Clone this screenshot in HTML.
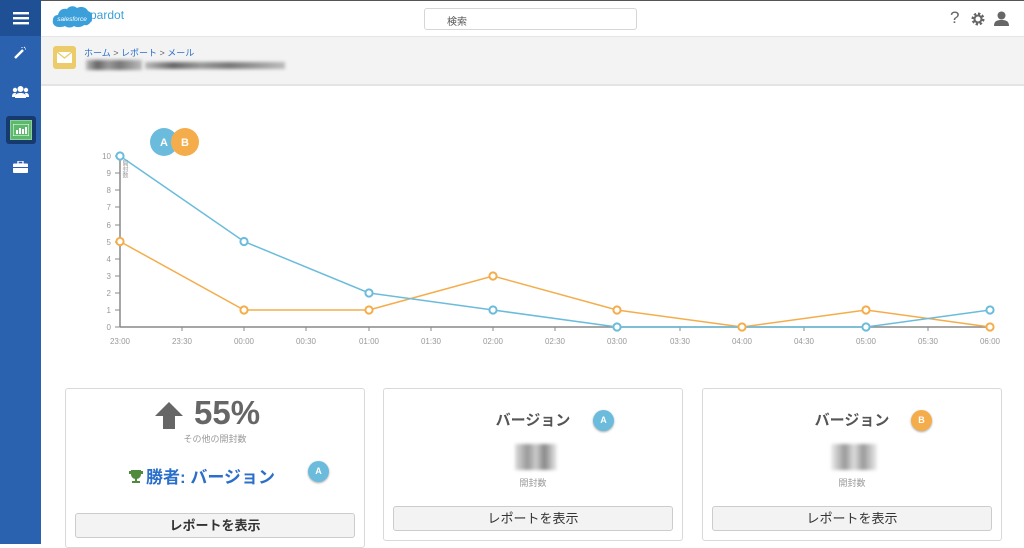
<!DOCTYPE html>
<html><head><meta charset="utf-8"><style>
*{margin:0;padding:0;box-sizing:border-box}
body{width:1024px;height:544px;overflow:hidden;background:#fff;font-family:"Liberation Sans","Noto Sans CJK JP",sans-serif;position:relative}
.side{position:absolute;left:0;top:0;width:41px;height:544px;background:#2a62b0}
.side .top{height:36px;background:#1f4f94;display:flex;align-items:center;justify-content:center}
.topbar{position:absolute;left:41px;top:0;right:0;height:36px;background:#fff;border-top:1px solid #555}
.hdr{position:absolute;left:41px;top:36px;right:0;height:50px;background:#f3f3f3;border-top:1px solid #e6e6e6;border-bottom:2px solid #e4e4e4}
.card{position:absolute;top:388px;width:300px;background:#fff;border:1px solid #d9d9d9;border-radius:3px}
.btn{position:absolute;left:9px;right:9px;height:25px;background:#f3f3f3;border:1px solid #ccc;border-radius:3px;text-align:center;font-size:13px;line-height:23px;color:#333}
.badge{position:absolute;width:21px;height:21px;border-radius:50%;color:#fff;font-size:9px;font-weight:bold;text-align:center;line-height:21px;box-shadow:0 1px 2px rgba(0,0,0,.35)}
.blur{position:absolute;background:linear-gradient(90deg,#bbb,#666 20%,#999 40%,#777 60%,#bbb);filter:blur(1.5px)}
</style></head><body>
<div class="side">
 <div class="top"><svg width="16" height="14"><rect y="1" width="16" height="2.4" fill="#fff"/><rect y="6" width="16" height="2.4" fill="#fff"/><rect y="11" width="16" height="2.4" fill="#fff"/></svg></div>
 <svg style="position:absolute;left:13px;top:46px" width="14" height="14"><path d="M2 12 L10 4" stroke="#fff" stroke-width="2.5"/><path d="M11 1l1 1M13 3l-1 0M9 1l0 1" stroke="#fff" stroke-width="1"/></svg>
 <svg style="position:absolute;left:12px;top:85px" width="17" height="13"><circle cx="8.5" cy="4" r="3" fill="#fff"/><circle cx="3" cy="5" r="2.2" fill="#fff"/><circle cx="14" cy="5" r="2.2" fill="#fff"/><path d="M3 13c0-4 2-5 5.5-5s5.5 1 5.5 5z M0 12c0-3 1-4 3-4l1 0 -1 4z M17 12c0-3-1-4-3-4l-1 0 1 4z" fill="#fff"/></svg>
 <div style="position:absolute;left:6px;top:116px;width:30px;height:28px;background:#163a6e;border-radius:3px"></div>
 <div style="position:absolute;left:10px;top:120px;width:22px;height:20px;background:#5cb86b;border:1px solid #8fd09a"></div>
 <svg style="position:absolute;left:13px;top:124px" width="16" height="12"><rect x="0" y="0" width="16" height="12" fill="none" stroke="#fff" stroke-width="1"/><rect x="3" y="6" width="2" height="4" fill="#fff"/><rect x="6" y="4" width="2" height="6" fill="#fff"/><rect x="9" y="5" width="2" height="5" fill="#fff"/><rect x="12" y="3" width="2" height="7" fill="#fff"/></svg>
 <svg style="position:absolute;left:13px;top:161px" width="15" height="12"><rect x="0" y="2.5" width="15" height="9.5" rx="1" fill="#fff"/><rect x="5" y="0" width="5" height="3" fill="none" stroke="#fff" stroke-width="1.3"/><rect x="0" y="6" width="15" height="1" fill="#2a62b0"/></svg>
</div>
<div class="topbar">
 <svg style="position:absolute;left:11px;top:1px" width="40" height="29"><path d="M7 25c-5 0-7-4-6-7 0-3 2-5 5-5 1-5 5-7 9-6 2-3 7-4 10-1 4-2 9-1 11 3 3 1 5 4 4 8-1 4-4 7-8 6-2 2-7 3-10 1-2 2-7 2-9 0-2 1-5 1-6 1z" fill="#3b9fd9"/><text x="20" y="19" font-size="6.5" fill="#fff" text-anchor="middle" font-style="italic" font-family="Liberation Sans">salesforce</text></svg>
 <span style="position:absolute;left:49px;top:7px;font-size:12px;color:#3b9fd9">pardot</span>
 <div style="position:absolute;left:383px;top:7px;width:213px;height:22px;border:1px solid #d6d6d6;border-radius:3px;font-size:10px;color:#555;padding:4px 0 0 22px">検索</div>
 <span style="position:absolute;left:909px;top:7px;font-size:17px;color:#666">?</span>
 <svg style="position:absolute;left:930px;top:11px" width="14" height="14"><circle cx="7" cy="7" r="5" fill="none" stroke="#666" stroke-width="3" stroke-dasharray="2.2 1.7"/><circle cx="7" cy="7" r="3.5" fill="none" stroke="#666" stroke-width="2"/></svg>
 <svg style="position:absolute;left:953px;top:10px" width="15" height="15"><circle cx="7.5" cy="4.5" r="4" fill="#666"/><path d="M0 15c0-5 3-6 7.5-6s7.5 1 7.5 6z" fill="#666"/></svg>
</div>
<div class="hdr">
 <div style="position:absolute;left:12px;top:9px;width:23px;height:23px;background:#eccc6a;border-radius:3px"></div>
 <svg style="position:absolute;left:16px;top:15px" width="15" height="11"><rect width="15" height="11" fill="#fff"/><path d="M0 0l7.5 6 7.5-6" stroke="#eccc6a" stroke-width="1.3" fill="none"/></svg>
 <div style="position:absolute;left:43px;top:9px;font-size:9px;color:#2a6fc9">ホーム <span style="color:#666">&gt;</span> レポート <span style="color:#666">&gt;</span> メール</div>
 <div class="blur" style="left:45px;top:23px;width:56px;height:10px"></div>
 <div class="blur" style="left:104px;top:25px;width:140px;height:7px"></div>
</div>
<svg style="position:absolute;left:0;top:0" width="1024" height="380" font-family="Liberation Sans" font-size="8" fill="#999">
 <line x1="120" y1="156" x2="120" y2="327" stroke="#888" stroke-width="1.5"/>
 <line x1="120" y1="327" x2="990" y2="327" stroke="#888" stroke-width="1.5"/>
 <g text-anchor="end">
 <text x="111" y="159">10</text><text x="111" y="176">9</text><text x="111" y="193">8</text><text x="111" y="210">7</text><text x="111" y="228">6</text><text x="111" y="245">5</text><text x="111" y="262">4</text><text x="111" y="279">3</text><text x="111" y="296">2</text><text x="111" y="313">1</text><text x="111" y="330">0</text>
 </g>
 <g stroke="#888"><path d="M115 156h5M115 173h5M115 190h5M115 207h5M115 225h5M115 242h5M115 259h5M115 276h5M115 293h5M115 310h5M115 327h5"/>
 <path d="M182 327v4M244 327v4M306 327v4M369 327v4M431 327v4M493 327v4M555 327v4M617 327v4M680 327v4M742 327v4M804 327v4M866 327v4M928 327v4M990 327v4"/></g>
 <g text-anchor="middle"><text x="120" y="344">23:00</text><text x="182" y="344">23:30</text><text x="244" y="344">00:00</text><text x="306" y="344">00:30</text><text x="369" y="344">01:00</text><text x="431" y="344">01:30</text><text x="493" y="344">02:00</text><text x="555" y="344">02:30</text><text x="617" y="344">03:00</text><text x="680" y="344">03:30</text><text x="742" y="344">04:00</text><text x="804" y="344">04:30</text><text x="866" y="344">05:00</text><text x="928" y="344">05:30</text><text x="990" y="344">06:00</text></g>
 <text x="124" y="160" font-size="6" writing-mode="tb">開封数</text>
 <polyline points="120,241.5 244,310 369,310 493,276 617,310 742,327 866,310 990,327" fill="none" stroke="#f4ad4a" stroke-width="1.5"/>
 <polyline points="120,156 244,241.5 369,293 493,310 617,327 742,327 866,327 990,310" fill="none" stroke="#6bbcdc" stroke-width="1.5"/>
 <g fill="#fff" stroke="#6bbcdc" stroke-width="2"><circle cx="120" cy="156" r="3.6"/><circle cx="244" cy="241.5" r="3.6"/><circle cx="369" cy="293" r="3.6"/><circle cx="493" cy="310" r="3.6"/><circle cx="617" cy="327" r="3.6"/><circle cx="866" cy="327" r="3.6"/><circle cx="990" cy="310" r="3.6"/></g>
 <g fill="#fff" stroke="#f4ad4a" stroke-width="2"><circle cx="120" cy="241.5" r="3.6"/><circle cx="244" cy="310" r="3.6"/><circle cx="369" cy="310" r="3.6"/><circle cx="493" cy="276" r="3.6"/><circle cx="617" cy="310" r="3.6"/><circle cx="742" cy="327" r="3.6"/><circle cx="866" cy="310" r="3.6"/><circle cx="990" cy="327" r="3.6"/></g>
 <circle cx="164" cy="142" r="14" fill="#6bbcdc"/><circle cx="185" cy="142" r="14" fill="#f4ad4a"/>
 <text x="164" y="146" font-size="11" font-weight="bold" fill="#fff" text-anchor="middle">A</text><text x="185" y="146" font-size="11" font-weight="bold" fill="#fff" text-anchor="middle">B</text>
</svg>
<div class="card" style="left:65px;height:160px">
 <svg style="position:absolute;left:89px;top:13px" width="28" height="27"><path d="M14 0L28 14h-8v13h-12v-13h-8z" fill="#666"/></svg>
 <div style="position:absolute;left:128px;top:5px;font-size:33px;font-weight:bold;color:#666">55%</div>
 <div style="position:absolute;left:0;right:0;top:43px;text-align:center;font-size:9px;color:#999">その他の開封数</div>
 <svg style="position:absolute;left:63px;top:80px" width="14" height="14"><path d="M2 1h10v4c0 3-2 5-5 5s-5-2-5-5z M0 2h2v3H0z M12 2h2v3h-2z" fill="#4f8a3d"/><rect x="6" y="9" width="2" height="3" fill="#4f8a3d"/><rect x="3" y="12" width="8" height="2" fill="#4f8a3d"/></svg>
 <div style="position:absolute;left:80px;top:74px;font-size:17px;font-weight:bold;color:#2a6fc9">勝者: バージョン</div>
 <div class="badge" style="left:242px;top:72px;background:#6bbcdc">A</div>
 <div class="btn" style="top:124px;font-weight:bold">レポートを表示</div>
</div>
<div class="card" style="left:383px;height:153px">
 <div style="position:absolute;left:0;right:0;top:20px;text-align:center;font-size:15px;font-weight:bold;color:#555">バージョン</div>
 <div class="badge" style="left:209px;top:21px;background:#6bbcdc">A</div>
 <div class="blur" style="left:131px;top:55px;width:42px;height:26px;background:linear-gradient(90deg,#ddd,#999 30%,#ccc 50%,#888 70%,#eee)"></div>
 <div style="position:absolute;left:0;right:0;top:87px;text-align:center;font-size:9px;color:#999">開封数</div>
 <div class="btn" style="top:117px">レポートを表示</div>
</div>
<div class="card" style="left:702px;height:153px">
 <div style="position:absolute;left:0;right:0;top:20px;text-align:center;font-size:15px;font-weight:bold;color:#555">バージョン</div>
 <div class="badge" style="left:208px;top:21px;background:#f4ad4a">B</div>
 <div class="blur" style="left:128px;top:55px;width:46px;height:26px;background:linear-gradient(90deg,#eee,#999 30%,#ddd 50%,#999 70%,#eee)"></div>
 <div style="position:absolute;left:0;right:0;top:87px;text-align:center;font-size:9px;color:#999">開封数</div>
 <div class="btn" style="top:117px">レポートを表示</div>
</div>
</body></html>
